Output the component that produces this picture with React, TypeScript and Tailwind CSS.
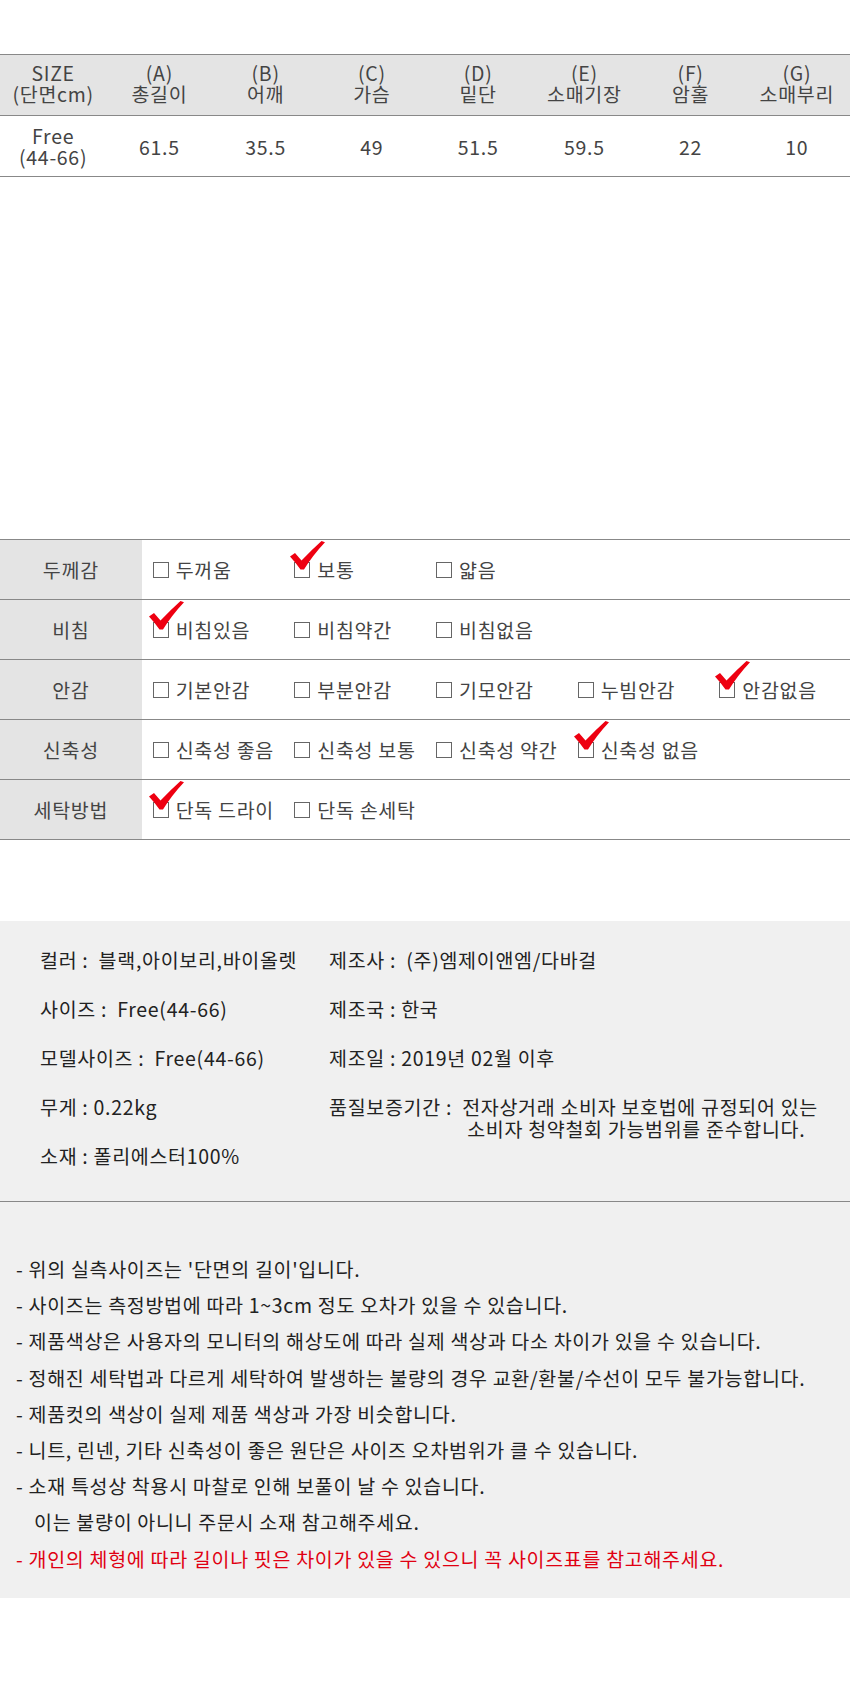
import React from 'react';

const SIZE_HEAD = [
  ['SIZE', '(단면cm)'],
  ['(A)', '총길이'],
  ['(B)', '어깨'],
  ['(C)', '가슴'],
  ['(D)', '밑단'],
  ['(E)', '소매기장'],
  ['(F)', '암홀'],
  ['(G)', '소매부리'],
];

const SIZE_ROW = ['61.5', '35.5', '49', '51.5', '59.5', '22', '10'];

const FEATURES: { label: string; options: string[]; checked: number }[] = [
  { label: '두께감', options: ['두꺼움', '보통', '얇음'], checked: 1 },
  { label: '비침', options: ['비침있음', '비침약간', '비침없음'], checked: 0 },
  { label: '안감', options: ['기본안감', '부분안감', '기모안감', '누빔안감', '안감없음'], checked: 4 },
  { label: '신축성', options: ['신축성 좋음', '신축성 보통', '신축성 약간', '신축성 없음'], checked: 3 },
  { label: '세탁방법', options: ['단독 드라이', '단독 손세탁'], checked: 0 },
];

const NOTES = [
  "- 위의 실측사이즈는 '단면의 길이'입니다.",
  '- 사이즈는 측정방법에 따라 1~3cm 정도 오차가 있을 수 있습니다.',
  '- 제품색상은 사용자의 모니터의 해상도에 따라 실제 색상과 다소 차이가 있을 수 있습니다.',
  '- 정해진 세탁법과 다르게 세탁하여 발생하는 불량의 경우 교환/환불/수선이 모두 불가능합니다.',
  '- 제품컷의 색상이 실제 제품 색상과 가장 비슷합니다.',
  '- 니트, 린넨, 기타 신축성이 좋은 원단은 사이즈 오차범위가 클 수 있습니다.',
  '- 소재 특성상 착용시 마찰로 인해 보풀이 날 수 있습니다.',
];

function CheckMark() {
  return (
    <svg
      width="35"
      height="29"
      viewBox="0 0 35 29"
      className="absolute left-[-5px] top-[-22px]"
    >
      <path
        d="M0 15.5 L5 12 L11.5 19.5 Q21.5 9 31.5 0 L35 1.2 Q22.5 14.5 14 28.5 L10.5 28.5 Q5.5 21.5 0 15.5 Z"
        fill="#ee0011"
      />
    </svg>
  );
}

function Option({ text, checked }: { text: string; checked: boolean }) {
  return (
    <div className="flex items-center pl-[11px]">
      <span className="relative mr-[7px] inline-block h-[16px] w-[16px] shrink-0 border border-[#666]">
        {checked && <CheckMark />}
      </span>
      <span className="whitespace-nowrap">{text}</span>
    </div>
  );
}

export default function App() {
  return (
    <div className="w-[850px] bg-white pt-[54px] pb-[104px] font-['Noto_Sans_CJK_KR',sans-serif] tracking-[0.7px]">
      {/* size table */}
      <div className="border-y border-[#888] text-[19.5px] leading-[21px] text-[#444]">
        <div className="grid h-[61px] grid-cols-8 items-center border-b border-[#888] bg-[#e4e4e4] text-center">
          {SIZE_HEAD.map(([a, b]) => (
            <div key={a} className="-mt-[4px]">
              <div>{a}</div>
              <div>{b}</div>
            </div>
          ))}
        </div>
        <div className="grid h-[60px] grid-cols-8 items-center text-center">
          <div>
            <div>Free</div>
            <div>(44-66)</div>
          </div>
          {SIZE_ROW.map((v, i) => (
            <div key={i}>{v}</div>
          ))}
        </div>
      </div>

      {/* feature table */}
      <div className="mt-[362px] border-t border-[#888] text-[19.5px] text-[#444]">
        {FEATURES.map((f) => (
          <div key={f.label} className="grid h-[60px] grid-cols-6 border-b border-[#888]">
            <div className="flex items-center justify-center bg-[#e4e4e4]">{f.label}</div>
            {f.options.map((o, i) => (
              <Option key={o} text={o} checked={i === f.checked} />
            ))}
          </div>
        ))}
      </div>

      {/* info */}
      <div className="mt-[81px] bg-[#f0f0f0]">
        <div className="flex border-b border-[#888] px-[40px] pt-[28px] pb-[34px] text-[19.5px] leading-[22px] text-[#222] whitespace-pre">
          <div className="flex w-[289px] shrink-0 flex-col gap-[27px]">
            <div>컬러 :  블랙,아이보리,바이올렛</div>
            <div>사이즈 :  Free(44-66)</div>
            <div>모델사이즈 :  Free(44-66)</div>
            <div>무게 : 0.22kg</div>
            <div>소재 : 폴리에스터100%</div>
          </div>
          <div className="flex flex-col gap-[27px]">
            <div>제조사 :  (주)엠제이앤엠/다바걸</div>
            <div>제조국 : 한국</div>
            <div>제조일 : 2019년 02월 이후</div>
            <div className="flex">
              <span>품질보증기간 :  </span>
              <div>
                <div>전자상거래 소비자 보호법에 규정되어 있는</div>
                <div className="pl-[5px]">소비자 청약철회 가능범위를 준수합니다.</div>
              </div>
            </div>
          </div>
        </div>

        <div className="px-[16px] pt-[49px] pb-[21px] text-[19.5px] leading-[36.2px] text-[#222]">
          {NOTES.map((n) => (
            <div key={n}>{n}</div>
          ))}
          <div className="pl-[18px]">이는 불량이 아니니 주문시 소재 참고해주세요.</div>
          <div className="text-[#e00012]">- 개인의 체형에 따라 길이나 핏은 차이가 있을 수 있으니 꼭 사이즈표를 참고해주세요.</div>
        </div>
      </div>
    </div>
  );
}
